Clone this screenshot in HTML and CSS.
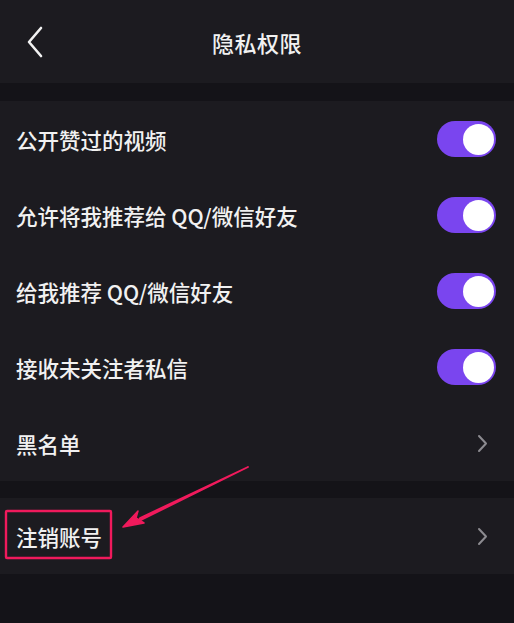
FILE: index.html
```html
<html>
<head>
<meta charset="utf-8">
<link rel="stylesheet" href="styles.css">
</head>
<body>
<div class="page">
  <div class="topbar">
    <div class="back">
      <svg width="18" height="32" viewBox="0 0 18 32"><path d="M15 2 L3 16 L15 30" fill="none" stroke="#f2f2f2" stroke-width="2.6" stroke-linecap="round" stroke-linejoin="round"/></svg>
    </div>
    <div class="title">隐私权限</div>
    <div></div>
  </div>

  <div class="gap"></div>

  <div class="group">
    <div class="row"><span class="label">公开赞过的视频</span><span class="switch"><i></i></span></div>
    <div class="row"><span class="label">允许将我推荐给 QQ/微信好友</span><span class="switch"><i></i></span></div>
    <div class="row"><span class="label">给我推荐 QQ/微信好友</span><span class="switch"><i></i></span></div>
    <div class="row"><span class="label">接收未关注者私信</span><span class="switch"><i></i></span></div>
    <div class="row link"><span class="label">黑名单</span>
      <svg class="arrow" width="11" height="19" viewBox="0 0 11 19"><path d="M2 2 L9 9.5 L2 17" fill="none" stroke="#8c8b90" stroke-width="2" stroke-linecap="round" stroke-linejoin="round"/></svg>
    </div>
  </div>

  <div class="gap small"></div>

  <div class="group">
    <div class="row link"><span class="label">注销账号</span>
      <svg class="arrow" width="11" height="19" viewBox="0 0 11 19"><path d="M2 2 L9 9.5 L2 17" fill="none" stroke="#8c8b90" stroke-width="2" stroke-linecap="round" stroke-linejoin="round"/></svg>
    </div>
  </div>

  <!-- annotation drawn over the screenshot -->
  <svg class="mark" width="514" height="623" viewBox="0 0 514 623">
    <rect x="6" y="511" width="105" height="47" fill="none" stroke="#f01a5c" stroke-width="2.4" rx="1"/>
    <path d="M248 467 L140 518 L139 521 Z" stroke="#f01a5c" stroke-width="1.8" stroke-linejoin="round" fill="#f01a5c"/>
    <path d="M123 527 L138 511 L136 518 L144 523 Z" fill="#f01a5c" stroke="#f01a5c" stroke-width="1.5" stroke-linejoin="round"/>
  </svg>
</div>
</body>
</html>
```

FILE: styles.css
```css
body
{
margin:0;
background:#141318;
font-family:"Noto Sans CJK SC","Noto Sans",sans-serif;
color:#f1f1f1;
}
.page
{
position:relative;
width:514px;
height:623px;
overflow:hidden;
}
.topbar
{
height:83px;
background:#1c1b20;
display:grid;
grid-template-columns:80px 1fr 80px;
align-items:center;
}
.back
{
padding-left:26px;
display:flex;
align-items:center;
}
.title
{
text-align:center;
font-size:22px;
font-weight:500;
letter-spacing:0.5px;
}
.gap
{
height:18px;
}
.gap.small
{
height:17px;
}
.group
{
background:#1c1b20;
}
.row
{
height:76px;
display:flex;
align-items:center;
justify-content:space-between;
padding:0 18px 0 16px;
}
.row.link
{
padding-right:26px;
}
.label
{
font-size:21.5px;
font-weight:500;
}
.switch
{
width:59px;
height:36px;
border-radius:18px;
background:#7a45ef;
display:flex;
align-items:center;
justify-content:flex-end;
padding-right:2px;
box-sizing:border-box;
}
.switch i
{
width:31px;
height:31px;
border-radius:50%;
background:#ffffff;
}
.mark
{
position:absolute;
top:0;
left:0;
}
```
